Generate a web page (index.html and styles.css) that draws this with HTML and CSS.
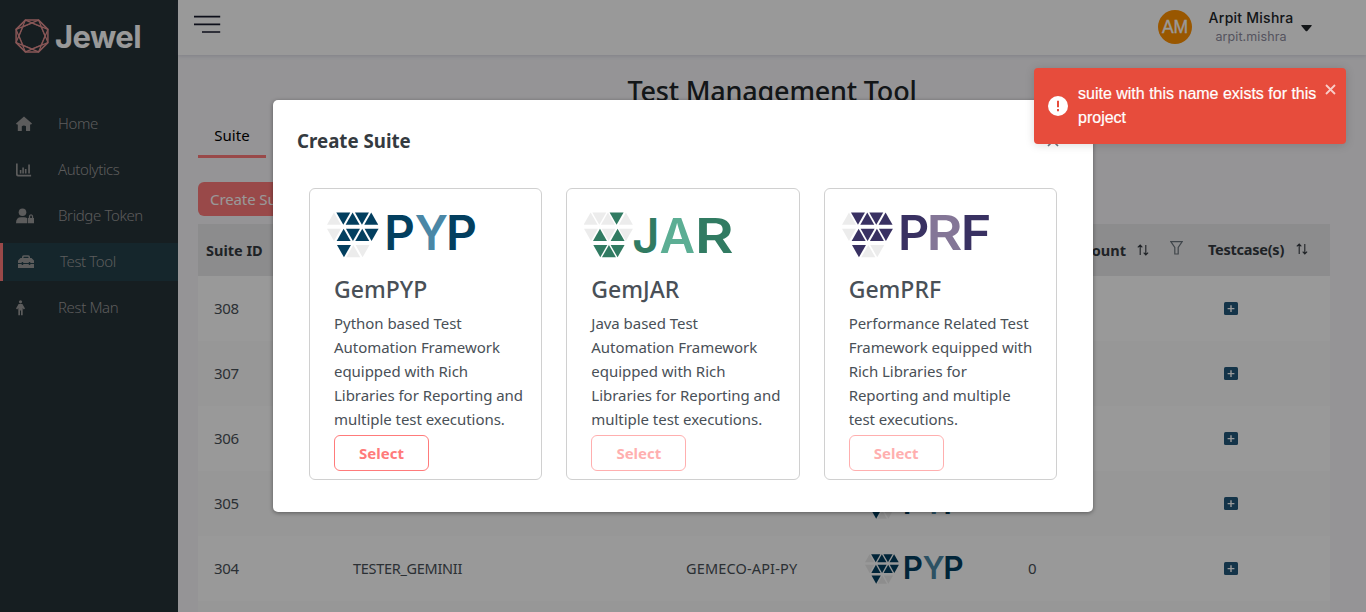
FILE: index.html
```html
<!DOCTYPE html>
<html lang="en">
<head>
<meta charset="utf-8">
<title>Jewel - Test Management Tool</title>
<link rel="stylesheet" href="styles.css">
</head>
<body>
<svg class="defs" width="0" height="0" aria-hidden="true">
  <defs>
    <path id="up" d="M0 0L21 37H-21Z"/>
    <path id="dn" d="M-21 0H21L0 37Z"/>
    <symbol id="pyp" viewBox="0 0 448 136">
      <g fill="#ececec"><use href="#up" x="21"/><use href="#dn" x="21" y="49"/><use href="#up" x="79" y="98"/><use href="#dn" x="107" y="98"/></g>
      <g fill="#033f5f"><use href="#dn" x="49"/><use href="#up" x="77"/><use href="#dn" x="105"/><use href="#up" x="133"/><use href="#up" x="50" y="49"/><use href="#dn" x="78" y="49"/><use href="#up" x="106" y="49"/><use href="#dn" x="134" y="49"/><use href="#dn" x="51" y="98"/></g>
      <g class="word" fill="#033f5f"><text x="172" y="114" textLength="92" lengthAdjust="spacingAndGlyphs">P</text><text x="264" y="114" textLength="100" lengthAdjust="spacingAndGlyphs" fill="#4a87a6">Y</text><text x="358" y="114" textLength="93" lengthAdjust="spacingAndGlyphs">P</text></g>
    </symbol>
    <symbol id="jar" viewBox="0 0 448 136">
      <g fill="#ececec"><use href="#up" x="20"/><use href="#dn" x="46"/><use href="#up" x="72"/><use href="#up" x="126"/><use href="#dn" x="21" y="49"/><use href="#dn" x="74" y="49"/><use href="#dn" x="126" y="49"/></g>
      <g fill="#317b62"><use href="#dn" x="98"/><use href="#up" x="48" y="49"/><use href="#up" x="101" y="49"/><use href="#dn" x="49" y="98"/><use href="#up" x="75" y="98"/><use href="#dn" x="101" y="98"/></g>
      <g class="word" fill="#317b62"><text x="145" y="121" textLength="82" lengthAdjust="spacingAndGlyphs">J</text><text x="227" y="121" textLength="107" lengthAdjust="spacingAndGlyphs" fill="#5cae94">A</text><text x="333" y="121" textLength="117" lengthAdjust="spacingAndGlyphs">R</text></g>
    </symbol>
    <symbol id="prf" viewBox="0 0 448 136">
      <g fill="#ececec"><use href="#up" x="21"/><use href="#dn" x="21" y="49"/><use href="#up" x="79" y="98"/><use href="#dn" x="106" y="98"/></g>
      <g fill="#393162"><use href="#dn" x="48"/><use href="#up" x="76"/><use href="#dn" x="103"/><use href="#up" x="131"/><use href="#up" x="50" y="49"/><use href="#dn" x="77" y="49"/><use href="#up" x="105" y="49"/><use href="#dn" x="132" y="49"/><use href="#dn" x="51" y="98"/></g>
      <g class="word" fill="#393162"><text x="168" y="114" textLength="94" lengthAdjust="spacingAndGlyphs">P</text><text x="254" y="114" textLength="108" lengthAdjust="spacingAndGlyphs" fill="#847697">R</text><text x="357" y="114" textLength="92" lengthAdjust="spacingAndGlyphs">F</text></g>
    </symbol>
    <symbol id="plus" viewBox="0 0 14 13"><rect width="14" height="13" rx="1.6" fill="#22577a"/><path d="M7 3.3v6.6M3.6 6.6h6.8" stroke="#fff" stroke-width="1.4"/></symbol>
    <symbol id="sort" viewBox="0 0 12 12"><path d="M3.2 11V1M.8 3.4L3.2 1l2.1 2.4M8.8 1v10M6.7 8.6L8.8 11l2.3-2.4" fill="none" stroke="#343a40" stroke-width="1.1"/></symbol>
  </defs>
</svg>
<div class="app">
  <aside class="side">
    <div class="brand">
      <svg width="34" height="34" viewBox="-17 -17 34 34" fill="none" stroke="#e39090" stroke-width="1.200" stroke-linejoin="round">
        <path d="M-6.600-15.900H6.600L15.900-6.600V6.600L6.600 15.900H-6.600L-15.900 6.600V-6.600Z" stroke-width="1.500"/>
        <path d="M-6.600-15.900L15.900-6.600L6.600 15.900L-15.900 6.600ZM6.600-15.900L15.900 6.600L-6.600 15.900L-15.900-6.600Z"/>
        <path d="M0-12.800L9-9L12.800 0L9 9L0 12.800L-9 9L-12.800 0L-9-9Z" stroke-width=".8"/>
      </svg>
      <span>Jewel</span>
    </div>
    <nav>
      <a class="item"><svg width="16" height="16" viewBox="0 0 16 16"><path d="M8 .4L0 7.600Q.3 8.800 1.800 8.500V15h4V10.300q2.100-1.400 4.200 0V15h4.100V8.500q1.600.2 1.900-.9Z"/></svg><span>Home</span></a>
      <a class="item"><svg width="16" height="16" viewBox="0 0 16 16"><path d="M0 1.500h1.700V12q0 .8.800.8h12.600v1.600H2Q0 14.400 0 12.500ZM3.800 8h1.600v3.500H3.800ZM6.300 5.500h1.600v6H6.300ZM8.900 7h1.600v4.500H8.900ZM12.200 2.500h1.700v9h-1.700Z"/></svg><span>Autolytics</span></a>
      <a class="item"><svg width="19" height="16" viewBox="0 0 19 16"><circle cx="6.500" cy="4.200" r="3.800"/><path d="M0 15.200Q0 9.300 5 9.300H8q2.100 0 3.300 1V15.200ZM12 10h.8V8.700q0-2.500 2.200-2.500t2.200 2.500V10h.8v5.200H12ZM14.200 10h1.700V8.700q0-1.100-.9-1.100t-.8 1.100Z" fill-rule="evenodd"/></svg><span>Bridge Token</span></a>
      <a class="item active"><svg width="16" height="16" viewBox="0 0 16 16"><path d="M4 4V3q0-1.800 1.800-1.800h4.400Q12 1.200 12 3v1h1.500L16 6.400V9h-3.700V8h-1.500v1H5.200V8H3.700v1H0V6.400L2.500 4ZM5.500 4h5V3.200q0-.5-.5-.5H6q-.5 0-.5.500ZM0 10.100h3.700v1h1.500v-1h5.600v1h1.500v-1H16v4H0Z" fill-rule="evenodd"/></svg><span>Test Tool</span></a>
      <a class="item"><svg width="16" height="16" viewBox="0 0 16 16"><circle cx="4.500" cy="1.800" r="1.600"/><path d="M2.600 4h3.800L9 8.600l-1.200.9L6.700 8V15.200H5V10.500H4V15.200H2.300V8L1.200 9.500 0 8.600Z"/></svg><span>Rest Man</span></a>
    </nav>
  </aside>
  <div class="main">
    <header class="top">
      <svg class="burger" width="27" height="19" viewBox="0 0 27 19"><path d="M0 1.700H26.200M0 9.400H26.200M8 17H26.200" stroke="#16192c" stroke-width="1.700"/></svg>
      <div class="user">
        <div class="avatar">AM</div>
        <div class="who"><b>Arpit Mishra</b><span>arpit.mishra</span></div>
        <svg width="11" height="7" viewBox="0 0 11 7"><path d="M.7 0h9.600q.8.300.2 1.100L6.300 5.900q-.8.800-1.600 0L.5 1.100Q-.1.300.7 0Z" fill="#212529"/></svg>
      </div>
    </header>
    <section class="page">
      <h1>Test Management Tool</h1>
      <div class="tabs"><span class="tab">Suite</span></div>
      <div><button class="create">Create Suite</button></div>
      <div class="table">
        <div class="row head"><div>Suite ID</div><div></div><div></div><div></div>
          <div class="count">Count <svg width="12" height="12"><use href="#sort"/></svg><svg class="filter" width="13" height="14" viewBox="0 0 13 14"><path d="M.8.700h11.400L8.200 6.500V13H4.800V6.500Z" fill="none" stroke="#6c757d" stroke-width="1.200"/></svg></div>
          <div class="cases"><span>Testcase(s)</span><svg width="12" height="12"><use href="#sort"/></svg></div></div>
        <div class="row"><div class="txt">308</div><div></div><div></div><div></div><div></div><div class="add"><svg width="14" height="13"><use href="#plus"/></svg></div></div>
        <div class="row alt"><div class="txt">307</div><div></div><div></div><div></div><div></div><div class="add"><svg width="14" height="13"><use href="#plus"/></svg></div></div>
        <div class="row"><div class="txt">306</div><div></div><div></div><div></div><div></div><div class="add"><svg width="14" height="13"><use href="#plus"/></svg></div></div>
        <div class="row alt"><div class="txt">305</div><div></div><div></div><div><svg width="98" height="30"><use href="#pyp"/></svg></div><div></div><div class="add"><svg width="14" height="13"><use href="#plus"/></svg></div></div>
        <div class="row"><div class="txt">304</div><div class="txt caps">TESTER_GEMINII</div><div class="txt caps wide">GEMECO-API-PY</div><div><svg width="98" height="30"><use href="#pyp"/></svg></div><div class="txt">0</div><div class="add"><svg width="14" height="13"><use href="#plus"/></svg></div></div>
        <div class="row alt"></div>
      </div>
    </section>
  </div>
</div>
<div class="mask">
  <div class="dialog">
    <div class="dhead"><h2>Create Suite</h2><svg width="12" height="12" viewBox="0 0 12 12"><path d="M1 1l10 10M11 1L1 11" stroke="#6c757d" stroke-width="1.700"/></svg></div>
    <div class="cards">
      <article class="card"><svg class="logo" width="149" height="46"><use href="#pyp"/></svg><h3>GemPYP</h3><p>Python based Test<br>Automation Framework<br>equipped with Rich<br>Libraries for Reporting and<br>multiple test executions.</p><button class="select">Select</button></article>
      <article class="card"><svg class="logo" width="149" height="46"><use href="#jar"/></svg><h3>GemJAR</h3><p>Java based Test<br>Automation Framework<br>equipped with Rich<br>Libraries for Reporting and<br>multiple test executions.</p><button class="select off">Select</button></article>
      <article class="card"><svg class="logo" width="149" height="46"><use href="#prf"/></svg><h3>GemPRF</h3><p>Performance Related Test<br>Framework equipped with<br>Rich Libraries for<br>Reporting and multiple<br>test executions.</p><button class="select off">Select</button></article>
    </div>
  </div>
</div>
<div class="toast">
  <svg width="20" height="20" viewBox="0 0 20 20"><circle cx="10" cy="10" r="10" fill="#fff"/><path d="M10 4.800v6.400M10 13v2.200" stroke="#e74c3c" stroke-width="2"/></svg>
  <div class="msg">suite with this name exists for this project</div>
  <svg class="x" width="11" height="11" viewBox="0 0 11 11"><path d="M1 1l9 9M10 1L1 10" stroke="#f8cdc8" stroke-width="1.800"/></svg>
</div>
</body>
</html>
```
FILE: styles.css
```css
* { box-sizing: border-box; }
body { margin: 0; height: 612px; overflow: hidden; font: 400 15.5px/24px "Noto Sans", "Open Sans", sans-serif; color: #212529; }
h1, h2, h3, p { margin: 0; }
svg { display: block; flex: none; }
button { font: inherit; cursor: pointer; }
.defs { position: absolute; }
.word { font: 600 143px Inter, sans-serif; }
.app { display: flex; height: 612px; overflow: hidden; }

.side { width: 178px; flex: none; background: #263238; }
.brand { display: flex; align-items: center; gap: 6px; height: 72px; padding-left: 15px; color: #fff; font: 700 31px/40px Inter, sans-serif; letter-spacing: -.6px; }
.brand span { padding-top: 2px; }
.side nav { display: flex; flex-direction: column; gap: 8px; padding-top: 33px; }
.item { display: flex; align-items: center; height: 38px; padding-left: 16px; color: #999; font-size: 15px; font-weight: 300; }
.item svg { fill: #999; }
.item span { margin: 0 0 2px 26px; letter-spacing: -.38px; }
.item svg[width="19"] + span { margin-left: 23px; }
.item.active { background: #23404a; border-left: 3px solid #ff7b7b; padding-left: 15px; }

.main { flex: 1; min-width: 0; background: #f8f7fa; }
.top { display: flex; justify-content: space-between; height: 55px; padding: 0 54px 0 16px; background: #fff; box-shadow: 0 1px 4px rgba(80, 80, 130, .2); }
.burger { margin-top: 15px; }
.user { display: flex; align-items: flex-start; padding-top: 10px; }
.avatar { width: 34px; height: 34px; border-radius: 50%; background: #ff9100; color: #fff; text-align: center; font: 400 17.5px/35px "Liberation Sans", sans-serif; -webkit-text-stroke: .3px #fff; }
.who { display: flex; flex-direction: column; align-items: center; width: 86px; margin: -1px 7px 0 16px; font-family: Inter, sans-serif; white-space: nowrap; }
.who b { font-size: 14px; line-height: 18px; font-weight: 500; letter-spacing: .25px; color: #212529; }
.who span { font-size: 12.5px; line-height: 20px; color: #8d8b9d; letter-spacing: .1px; }
.user > svg { margin-top: 15px; }

.page { display: flex; flex-direction: column; padding: 16px 36px 0 20px; }
h1 { font-size: 27px; line-height: 40px; font-weight: 500; text-align: center; width: 1148px; letter-spacing: -.2px; }
.tabs { display: flex; height: 47px; align-items: flex-end; }
.tab { width: 68px; height: 35px; border-bottom: 3px solid #ff7b7b; color: #000; text-align: center; font-size: 15px; line-height: 25px; }
.create { display: block; width: 110px; height: 34px; margin: 24px 0 8px; border: 0; border-radius: 6px; padding: 0 12px; background: #ff7b7b; color: #fff; font-size: 15px; white-space: nowrap; text-align: left; letter-spacing: -.1px; }
.row { display: grid; grid-template-columns: 139px 333px 182px 160px 188px 130px; height: 65px; align-items: center; background: #fff; color: #495057; font-size: 15px; }
.row > div { padding-left: 16px; }
.row > .txt { padding-bottom: 2px; letter-spacing: -.35px; }
.row.alt { background: #fcfcfc; }
.row.head { height: 52px; background: #e9e9eb; color: #343a40; font-weight: 700; font-size: 14.5px; }
.row.head > div { padding-left: 8px; }
.row.head .count, .row.head .cases { display: flex; align-items: center; gap: 12px; }
.row.head .cases { padding-bottom: 2px; letter-spacing: -.25px; }
.row.head .count { justify-content: flex-end; gap: 11px; padding-right: 17px; }
.filter { margin: -4px 0 0 10px; }
.row > .add { padding-left: 24px; }
.row svg[width="98"] { margin-left: -3px; }
.row > .caps { font-size: 14.5px; letter-spacing: -.3px; }
.row > .wide { letter-spacing: .15px; }

.mask { position: absolute; inset: 0; display: flex; align-items: center; justify-content: center; background: rgba(0, 0, 0, .4); }
.dialog { width: 820px; height: 412px; border-radius: 5px; background: #fff; box-shadow: 0 1px 4px rgba(0, 0, 0, .4); }
.dhead { display: flex; align-items: center; justify-content: space-between; height: 88px; padding: 0 34px 6px 24px; }
h2 { font-size: 18.7px; font-weight: 700; color: #343a40; }
.cards { display: grid; grid-template-columns: repeat(3, 1fr); gap: 24px; padding: 0 36px; }
.card { height: 292px; padding: 23px 0 0 24px; border: 1px solid #d0d0d0; border-radius: 6px; color: #495057; white-space: nowrap; }
.logo { margin-left: -7px; }
h3 { height: 53px; font-size: 23px; font-weight: 500; line-height: 62px; }
.card p { font-size: 15px; line-height: 24px; letter-spacing: -.04px; }
.select { display: block; width: 95px; height: 36px; margin-top: 4px; border: 1px solid #ff7b7b; border-radius: 6px; background: #fff; color: #ff7b7b; font-size: 15px; font-weight: 700; }
.select.off { opacity: .6; }

.toast { position: absolute; left: 1034px; top: 68px; width: 312px; height: 76px; display: flex; align-items: center; padding-left: 14px; border-radius: 4px; background: #e74c3c; box-shadow: 0 1px 10px rgba(0, 0, 0, .15); color: #fff; font: 16px/24px "Liberation Sans", sans-serif; }
.msg { width: 242px; margin-left: 10px; -webkit-text-stroke: .2px #fff; }
.toast .x { margin: -34px 0 0 5px; }
```
